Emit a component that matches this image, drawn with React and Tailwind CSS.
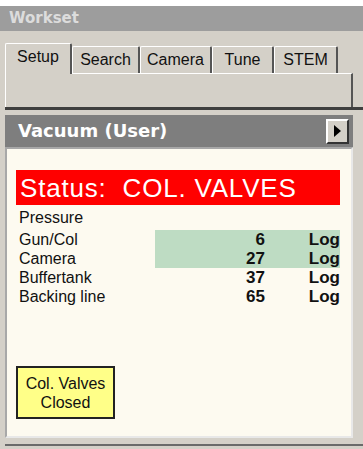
export default function App() {
  const tabs = ['Setup', 'Search', 'Camera', 'Tune', 'STEM'];
  const widths = ['w-[67px]', 'w-[68px]', 'w-[72px]', 'w-[62px]', 'w-[64px]'];
  const rows = [
    { name: 'Gun/Col', value: '6', ok: true },
    { name: 'Camera', value: '27', ok: true },
    { name: 'Buffertank', value: '37', ok: false },
    { name: 'Backing line', value: '65', ok: false },
  ];

  return (
    <div className="w-[363px] h-[449px] bg-white pt-[6px] font-['Liberation_Sans',Arial,sans-serif] overflow-hidden">
      {/* Workset title */}
      <div className="h-[25px] bg-[#9d9d9d] pl-[9px] flex items-center">
        <span className="font-['DejaVu_Sans',sans-serif] font-bold text-[15px] text-[#dcdcdc]">Workset</span>
      </div>

      <div className="h-[418px] bg-[#d4d0c8] flex flex-col">
        {/* Tabs */}
        <div className="pl-[5px] pr-[10px] pt-[11px]">
          <div className="flex items-end h-[31px]">
            {tabs.map((t, i) => (
              <div
                key={t}
                className={
                  (i === 0
                    ? 'h-[31px] pb-[4px] z-10 -mb-px bg-[#d4d0c8] '
                    : 'h-[27px] ') +
                  widths[i] +
                  ' border-l border-t border-r-2 border-l-white border-t-white border-r-[#555] flex items-center justify-center rounded-t-[2px] text-[16px] text-[#111]'
                }
              >
                {t}
              </div>
            ))}
          </div>
          <div className="h-[34px] border-t border-t-white border-l border-l-white border-r-2 border-r-[#555]" />
        </div>
        <div className="h-[3px] bg-[#3f3f3f] ml-[5px]" />

        {/* Vacuum panel */}
        <div className="mt-[5px] ml-[5px] mr-[10px] flex flex-col">
          <div className="h-[32px] bg-[#7e7e7e] flex items-center justify-between pl-[13px] pr-[4px]">
            <span className="font-['DejaVu_Sans',sans-serif] font-bold text-[18px] text-white leading-none">Vacuum (User)</span>
            <div className="w-[23px] h-[25px] bg-[#d4d0c8] border-2 border-t-white border-l-white border-r-[#333] border-b-[#333] flex items-center justify-center">
              <svg width="7" height="12" viewBox="0 0 7 12">
                <path d="M0 0 L7 6 L0 12 Z" fill="#000" />
              </svg>
            </div>
          </div>
          <div className="h-[291px] bg-[#fdfaf0] border-2 border-t-[#a8a8a8] border-l-[#a8a8a8] border-r-[#e8e8e8] border-b-[#e8e8e8] pl-[9px] pr-[11px] pt-[21px]">
            <div className="h-[35px] bg-[#ff0000] text-white text-[26px] tracking-[0.8px] leading-none flex items-center pl-[4px] whitespace-pre">
              Status:  COL. VALVES
            </div>
            <div className="text-[16px] leading-[19px] text-[#111] pl-[3px] mt-[3px]">Pressure</div>
            <div className="mt-[3px]">
              {rows.map((r) => (
                <div key={r.name} className="flex h-[19px] items-center text-[16px] text-[#111]">
                  <div className="w-[139px] pl-[3px]">{r.name}</div>
                  <div className={'flex-1 flex items-center h-full text-[17px] font-bold ' + (r.ok ? 'bg-[#bedcc3]' : '')}>
                    <div className="w-[110px] text-right">{r.value}</div>
                    <div className="flex-1 text-right">Log</div>
                  </div>
                </div>
              ))}
            </div>
            <div className="mt-[60px] w-[99px] h-[53px] bg-[#ffff88] border-2 border-[#222] flex items-center justify-center text-center text-[16px] leading-[19px] text-[#111]">
              Col. Valves
              <br />
              Closed
            </div>
          </div>
        </div>
        <div className="flex-1" />
        <div className="h-[2px] bg-[#6a6a6a] ml-[5px] mb-[3px]" />
      </div>
    </div>
  );
}
